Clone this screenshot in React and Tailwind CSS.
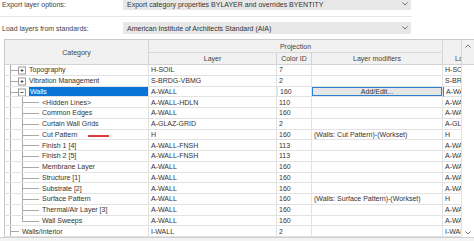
import React from 'react';

const GRID = 'grid grid-cols-[144px_128px_35px_131px_19px_12px]';

const rows = [
  { name: 'Topography', kind: 'root', box: '+', layer: 'H-SOIL', color: '7', mod: '', la: 'H-SOIL' },
  { name: 'Vibration Management', kind: 'root', box: '+', layer: 'S-BRDG-VBMG', color: '2', mod: '', la: 'S-BRDG-VBMG' },
  { name: 'Walls', kind: 'root', box: '-', layer: 'A-WALL', color: '160', mod: 'button', la: 'A-WALL', selected: true },
  { name: '<Hidden Lines>', kind: 'child', layer: 'A-WALL-HDLN', color: '110', mod: '', la: 'A-WALL' },
  { name: 'Common Edges', kind: 'child', layer: 'A-WALL', color: '160', mod: '', la: 'A-WALL' },
  { name: 'Curtain Wall Grids', kind: 'child', layer: 'A-GLAZ-GRID', color: '2', mod: '', la: 'A-GLAZ' },
  { name: 'Cut Pattern', kind: 'child', layer: 'H', color: '160', mod: '(Walls: Cut Pattern)-(Workset)', la: 'H' },
  { name: 'Finish 1 [4]', kind: 'child', layer: 'A-WALL-FNSH', color: '113', mod: '', la: 'A-WALL' },
  { name: 'Finish 2 [5]', kind: 'child', layer: 'A-WALL-FNSH', color: '113', mod: '', la: 'A-WALL' },
  { name: 'Membrane Layer', kind: 'child', layer: 'A-WALL', color: '160', mod: '', la: 'A-WALL' },
  { name: 'Structure [1]', kind: 'child', layer: 'A-WALL', color: '160', mod: '', la: 'A-WALL' },
  { name: 'Substrate [2]', kind: 'child', layer: 'A-WALL', color: '160', mod: '', la: 'A-WALL' },
  { name: 'Surface Pattern', kind: 'child', layer: 'A-WALL', color: '160', mod: '(Walls: Surface Pattern)-(Workset)', la: 'H' },
  { name: 'Thermal/Air Layer [3]', kind: 'child', layer: 'A-WALL', color: '160', mod: '', la: 'A-WALL' },
  { name: 'Wall Sweeps', kind: 'child', layer: 'A-WALL', color: '160', mod: '', la: 'A-WALL', lastChild: true },
  { name: 'Walls/Interior', kind: 'leaf', layer: 'I-WALL', color: '2', mod: '', la: 'I-WALL', last: true },
];

function Chevron({ up = false, className = '' }) {
  return (
    <svg width="6" height="4" viewBox="0 0 6 4" className={className}>
      <path d={up ? 'M0.5 3.5 L3 1 L5.5 3.5' : 'M0.5 0.5 L3 3 L5.5 0.5'} fill="none" stroke="#606060" strokeWidth="0.9" />
    </svg>
  );
}

// tree guide lines for the category column, 11px row
function TreeGuide({ row }) {
  const g = '#a8a8a8';
  return (
    <svg width="36" height="11" viewBox="0 0 36 11" className="shrink-0">
      {/* root level vertical */}
      <line x1="5.5" y1="0" x2="5.5" y2="11" stroke={g} strokeWidth="1" />
      {row.kind === 'root' && (
        <>
          <line x1="5.5" y1="5.5" x2="13" y2="5.5" stroke={g} strokeWidth="1" />
          <rect x="13.5" y="2" width="7" height="7" fill="#fff" stroke="#9a9a9a" strokeWidth="1" />
          <line x1="15.5" y1="5.5" x2="18.5" y2="5.5" stroke="#555" strokeWidth="1" />
          {row.box === '+' && <line x1="17" y1="4" x2="17" y2="7" stroke="#555" strokeWidth="1" />}
          {row.box === '-' && <line x1="17" y1="9" x2="17" y2="11" stroke={g} strokeWidth="1" />}
        </>
      )}
      {row.kind === 'child' && (
        <>
          <line x1="17.5" y1="0" x2="17.5" y2={row.lastChild ? 5.5 : 11} stroke={g} strokeWidth="1" />
          <line x1="17.5" y1="5.5" x2="34" y2="5.5" stroke={g} strokeWidth="1" />
        </>
      )}
      {row.kind === 'leaf' && <line x1="5.5" y1="5.5" x2="14" y2="5.5" stroke={g} strokeWidth="1" />}
    </svg>
  );
}

function Row({ row }) {
  const cell = 'h-[10.75px] border-b border-r border-[#e2e2e2] flex items-center overflow-hidden whitespace-nowrap';
  const textStart = row.kind === 'child' ? 'ml-[1px]' : row.kind === 'leaf' ? '-ml-[19px]' : 'ml-[-11px]';
  return (
    <div className={GRID}>
      <div className={`${cell} relative`}>
        <div className="absolute left-0 top-0">
          <TreeGuide row={row} />
        </div>
        <div className={`flex items-center h-full ${row.kind === 'child' ? 'pl-[37px]' : row.kind === 'leaf' ? 'pl-[17px]' : 'pl-[24px]'}`}>
          <span className={row.selected ? 'bg-[#0a74d6] text-white h-[10.75px] flex items-center pl-[1px] w-[120px]' : ''}>
            {row.name}
          </span>
        </div>
      </div>
      <div className={`${cell} pl-[2px]`}>{row.layer}</div>
      <div className={`${cell} pl-[2px] ${row.selected ? 'border border-[#3d6fa3] border-t-0' : ''}`}>{row.color}</div>
      <div className={`${cell} ${row.mod === 'button' ? 'p-0' : 'pl-[2px]'}`}>
        {row.mod === 'button' ? (
          <div className="w-full h-full bg-[#e6e6e6] border border-[#2f7fcf] flex items-center justify-center">Add/Edit...</div>
        ) : (
          row.mod
        )}
      </div>
      <div className={`${cell} pl-[2px] ${row.selected ? 'border-l border-l-[#2f7fcf]' : ''}`}>{row.la}</div>
      <div className="h-[10.75px] flex items-end justify-center bg-white">
        {row.last && <Chevron className="mb-[2px] -ml-[1px]" />}
      </div>
    </div>
  );
}

export default function App() {
  return (
    <div className="relative w-[474px] h-[241px] bg-white overflow-hidden text-[7px] text-[#333] font-['Liberation_Sans',Arial,sans-serif] leading-none">
      {/* export options */}
      <div className="flex items-center h-[12px] -mt-[2px]">
        <div className="w-[123px] pl-[2px] text-[#444]">Export layer options:</div>
        <div className="w-[288px] h-full bg-[#e7e7e7] flex items-center justify-between pl-[4px] pr-[3px]">
          <span>Export category properties BYLAYER and overrides BYENTITY</span>
          <Chevron />
        </div>
      </div>
      <div className="mt-[6px] h-px w-[412px] bg-[#e6e6e6]" />
      <div className="flex items-center h-[12px] mt-[5px]">
        <div className="w-[123px] pl-[2px] text-[#444]">Load layers from standards:</div>
        <div className="w-[288px] h-full bg-[#e7e7e7] flex items-center justify-between pl-[4px] pr-[3px]">
          <span>American Institute of Architects Standard (AIA)</span>
          <Chevron />
        </div>
      </div>

      {/* table */}
      <div className="mt-[5px] ml-[4px] border-l border-t border-[#c9c9c9]">
        <div className={`${GRID} grid-rows-[13px_12px] bg-[#f1f1f1] text-[#444]`}>
          <div className="row-span-2 border-r border-b border-[#d4d4d4] flex items-center justify-center">Category</div>
          <div className="col-span-3 border-r border-b border-[#d9d9d9] flex items-center justify-center">Projection</div>
          <div className="border-r border-[#d9d9d9]" />
          <div className="row-span-2 flex justify-center pt-[4px] border-b border-[#d4d4d4]">
            <Chevron up />
          </div>
          <div className="border-r border-b border-[#d4d4d4] flex items-center justify-center">Layer</div>
          <div className="border-r border-b border-[#d4d4d4] flex items-center justify-center">Color ID</div>
          <div className="border-r border-b border-[#d4d4d4] flex items-center justify-center">Layer modifiers</div>
          <div className="border-r border-b border-[#d4d4d4] flex items-center pl-[12px] overflow-hidden">La</div>
        </div>
        {rows.map((r) => (
          <Row key={r.name} row={r} />
        ))}
      </div>
      <div className="h-[4px] border-t border-[#cfcfcf] bg-[#f3f3f3]" />

      {/* red annotation mark */}
      <div className="absolute left-[88px] top-[135px] w-[21px] h-[1.5px] bg-[#e23a3a]" />
    </div>
  );
}
